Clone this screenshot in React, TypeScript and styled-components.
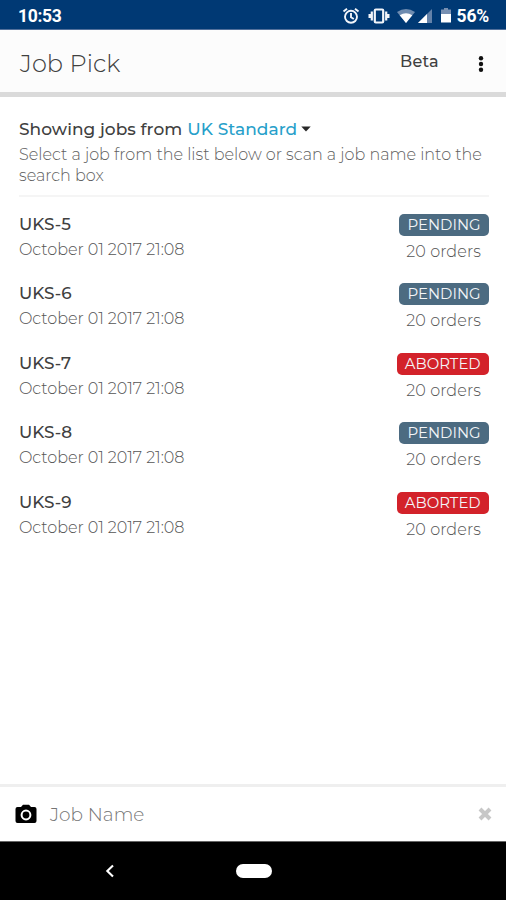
import React from 'react';
import styled, { createGlobalStyle } from 'styled-components';

const GlobalStyle = createGlobalStyle`
  * { box-sizing: border-box; }
  body { margin: 0; background: #fff; }
`;

const Screen = styled.div`
  display: flex;
  flex-direction: column;
  width: 506px;
  height: 900px;
  overflow: hidden;
  background: #fff;
  color: #404040;
  font-family: Montserrat, Inter, sans-serif;
  font-size: 16px;
  white-space: nowrap;
`;

const StatusBar = styled.div`
  display: flex;
  flex: none;
  align-items: center;
  justify-content: space-between;
  height: 30px;
  padding: 2px 17px 0 18px;
  background: #003974;
  border-bottom: 1px solid #52709b;
  color: #fff;
  font: 700 17.5px/28px Roboto, sans-serif;
`;

const Clock = styled.span`
  letter-spacing: -0.3px;
`;

const StatusIcons = styled.div`
  display: flex;
  align-items: center;
  svg { display: block; }
`;

const Percent = styled.span`
  margin-left: 5px;
  letter-spacing: -0.2px;
`;

const AppBar = styled.header`
  display: flex;
  flex: none;
  align-items: center;
  height: 67px;
  padding: 0 21px 0 20px;
  background: #fcfcfc;
  border-bottom: 5px solid #dadada;
`;

const Title = styled.h1`
  flex: 1;
  margin: 5px 0 0;
  font-size: 24px;
  font-weight: 300;
  line-height: 30px;
  letter-spacing: 0.1px;
`;

const Beta = styled.span`
  margin: 1px 38px 0 0;
  font-size: 16px;
  font-weight: 500;
  letter-spacing: 0.3px;
`;

const Content = styled.main`
  flex: 1;
  padding: 20px 17px 0 19px;
`;

const Intro = styled.section`
  height: 80px;
  border-bottom: 2px solid #f5f5f5;
`;

const Heading = styled.h2`
  display: flex;
  align-items: center;
  margin: 0;
  font-size: 17px;
  font-weight: 500;
  line-height: 25px;
  letter-spacing: 0.05px;
  svg { margin: 0 0 1px 4px; }
`;

const Region = styled.span`
  margin-left: 5px;
  color: #279fca;
`;

const Hint = styled.p`
  margin: 3px 0 0;
  color: #5e5e5e;
  font-weight: 300;
  line-height: 20.5px;
`;

const JobList = styled.ul`
  margin: 0;
  padding: 15px 0 0;
  list-style: none;
`;

const Job = styled.li`
  display: flex;
  justify-content: space-between;
  height: 69.4px;
`;

const JobName = styled.div`
  font-size: 16.8px;
  font-weight: 500;
  line-height: 25px;
`;

const JobDate = styled.div`
  color: #545454;
  font-weight: 300;
  line-height: 25px;
  letter-spacing: -0.05px;
`;

const JobState = styled.div`
  display: flex;
  flex-direction: column;
  align-items: flex-end;
  padding-top: 2px;
`;

const Badge = styled.span<{ $aborted: boolean }>`
  width: ${(p) => (p.$aborted ? 92.5 : 90)}px;
  height: 22px;
  border-radius: 5px;
  background: ${(p) => (p.$aborted ? '#d3222a' : '#4c6b81')};
  color: #f4f6f8;
  font-size: 14.9px;
  line-height: 22px;
  text-align: center;
`;

const Orders = styled.div`
  margin: 3px 8px 0 0;
  color: #545454;
  font-weight: 300;
  line-height: 25px;
  letter-spacing: 0.1px;
`;

const SearchBar = styled.div`
  display: flex;
  flex: none;
  align-items: center;
  height: 57px;
  padding: 0 14px 0 15px;
  border-top: 3px solid #efefef;
`;

const Placeholder = styled.span`
  flex: 1;
  margin: 0 0 0 13px;
  color: #757575;
  font-size: 18.5px;
  font-weight: 300;
`;

const NavBar = styled.nav`
  display: flex;
  flex: none;
  align-items: center;
  height: 59px;
  padding-left: 105px;
  background: #000;
  border-top: 1px solid #666;
`;

const HomePill = styled.span`
  width: 36px;
  height: 14px;
  margin-left: 121px;
  border-radius: 7px;
  background: #fff;
`;

const AlarmIcon = () => (
  <svg width="18" height="18" viewBox="0 0 18 18" fill="none" stroke="#f2f5fa" strokeWidth="1.9">
    <circle cx="9" cy="9.8" r="6" />
    <path d="M1.5 4.6 5 1.7M16.5 4.6 13 1.7M9 6v4.2l2.8 1.8" />
  </svg>
);

const VibrateIcon = () => (
  <svg width="22" height="18" viewBox="0 0 22 18" fill="none" stroke="#f2f5fa" strokeWidth="2.2">
    <rect x="6.8" y="2.5" width="8.4" height="13" rx="1" />
    <path d="M3.8 4.5v9M18.2 4.5v9M1.6 7v4M20.4 7v4" />
  </svg>
);

const WifiIcon = () => (
  <svg width="20" height="16" viewBox="0 0 20 16">
    <path d="M1 4Q10-2 19 4L10 15Z" fill="#6f8cb0" />
    <path d="M3.7 7.2Q10 3.2 16.3 7.2L10 15Z" fill="#fff" />
  </svg>
);

const SignalIcon = () => (
  <svg width="16" height="16" viewBox="0 0 16 16">
    <path d="M15 1v14H1Z" fill="#6482a9" />
    <path d="M10 6v9H1Z" fill="#fff" />
  </svg>
);

const BatteryIcon = () => (
  <svg width="12" height="17" viewBox="0 0 12 17">
    <path d="M1 2.5h3V1h4v1.5h3V7H1Z" fill="#7890b2" />
    <path d="M1 7h10v8.5H1Z" fill="#fff" />
  </svg>
);

const MoreSvg = styled.svg`
  margin-top: 5px;
`;

const MoreIcon = () => (
  <MoreSvg width="8" height="18" viewBox="0 0 8 18" fill="#111">
    <circle cx="4" cy="3.2" r="2.2" /><circle cx="4" cy="9" r="2.2" /><circle cx="4" cy="14.8" r="2.2" />
  </MoreSvg>
);

const CaretIcon = () => (
  <svg width="10" height="6" viewBox="0 0 10 6"><path d="M.3.5h9.4L5 5.6Z" fill="#282828" /></svg>
);

const CameraIcon = () => (
  <svg width="22" height="20" viewBox="0 0 22 20">
    <path d="M2.5 3H6l2-2.3h6L16 3h3.5Q21.5 3 21.5 5v12q0 2-2 2h-17q-2 0-2-2V5q0-2 2-2Z" fill="#000" />
    <circle cx="11" cy="11" r="4.4" fill="none" stroke="#fff" strokeWidth="2" />
  </svg>
);

const ClearIcon = () => (
  <svg width="14" height="14" viewBox="0 0 14 14">
    <path d="m2 2 10 10m0-10-10 10" stroke="#c7c7c7" strokeWidth="4" />
  </svg>
);

const BackIcon = () => (
  <svg width="10" height="14" viewBox="0 0 10 14">
    <path d="M8 1.4 2.3 7l5.7 5.6" fill="none" stroke="#fff" strokeWidth="2.1" />
  </svg>
);

const jobs = [
  { name: 'UKS-5', status: 'PENDING' },
  { name: 'UKS-6', status: 'PENDING' },
  { name: 'UKS-7', status: 'ABORTED' },
  { name: 'UKS-8', status: 'PENDING' },
  { name: 'UKS-9', status: 'ABORTED' },
];

const IconSlot = styled.span<{ $gap: number }>`
  margin-left: ${(p) => p.$gap}px;
`;

export default function App() {
  return (
    <>
      <GlobalStyle />
      <Screen>
        <StatusBar>
          <Clock>10:53</Clock>
          <StatusIcons>
            <AlarmIcon />
            <IconSlot $gap={8}><VibrateIcon /></IconSlot>
            <IconSlot $gap={6}><WifiIcon /></IconSlot>
            <IconSlot $gap={1}><SignalIcon /></IconSlot>
            <IconSlot $gap={7}><BatteryIcon /></IconSlot>
            <Percent>56%</Percent>
          </StatusIcons>
        </StatusBar>
        <AppBar>
          <Title>Job Pick</Title>
          <Beta>Beta</Beta>
          <MoreIcon />
        </AppBar>
        <Content>
          <Intro>
            <Heading>Showing jobs from <Region>UK Standard</Region><CaretIcon /></Heading>
            <Hint>Select a job from the list below or scan a job name into the<br />search box</Hint>
          </Intro>
          <JobList>
            {jobs.map((job) => (
              <Job key={job.name}>
                <div>
                  <JobName>{job.name}</JobName>
                  <JobDate>October 01 2017 21:08</JobDate>
                </div>
                <JobState>
                  <Badge $aborted={job.status === 'ABORTED'}>{job.status}</Badge>
                  <Orders>20 orders</Orders>
                </JobState>
              </Job>
            ))}
          </JobList>
        </Content>
        <SearchBar>
          <CameraIcon />
          <Placeholder>Job Name</Placeholder>
          <ClearIcon />
        </SearchBar>
        <NavBar>
          <BackIcon />
          <HomePill />
        </NavBar>
      </Screen>
    </>
  );
}
